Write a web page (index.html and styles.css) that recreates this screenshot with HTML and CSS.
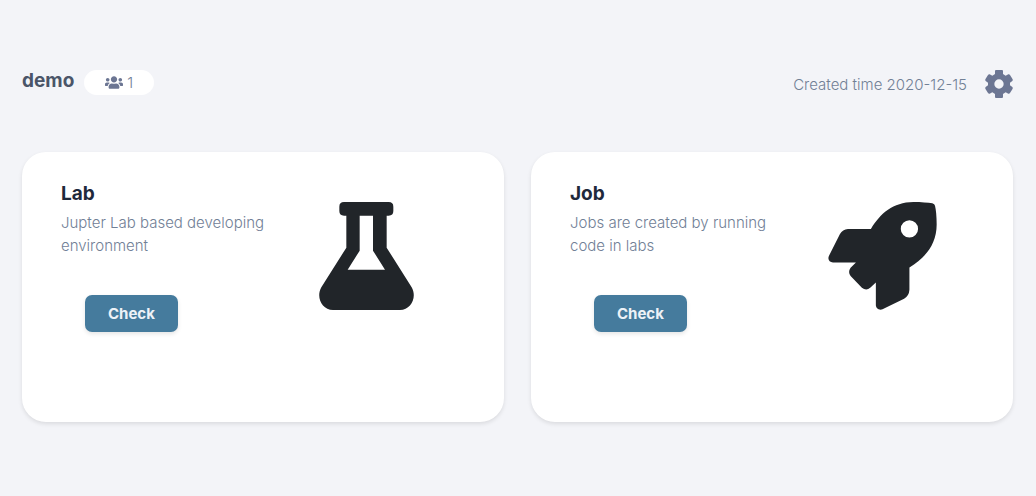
FILE: index.html
```html
<!DOCTYPE html>
<html lang="en">
<head>
<meta charset="utf-8">
<meta name="viewport" content="width=device-width, initial-scale=1">
<title>demo</title>
<link rel="stylesheet" href="styles.css">
</head>
<body>
<main class="page">
  <header class="project">
    <h1 class="project-name">demo</h1>
    <span class="members">
      <svg class="members-icon" viewBox="0 0 640 512" aria-hidden="true"><path d="M96 224c35.300 0 64-28.700 64-64s-28.700-64-64-64-64 28.700-64 64 28.700 64 64 64zm448 0c35.300 0 64-28.700 64-64s-28.700-64-64-64-64 28.700-64 64 28.700 64 64 64zm32 32h-64c-17.600 0-33.500 7.100-45.100 18.600 40.300 22.100 68.900 62 75.100 109.400h66c17.700 0 32-14.300 32-32v-32c0-35.300-28.700-64-64-64zm-256 0c61.900 0 112-50.100 112-112S381.900 32 320 32 208 82.100 208 144s50.100 112 112 112zm76.800 32h-8.300c-20.800 10-43.900 16-68.500 16s-47.600-6-68.500-16h-8.300C179.600 288 128 339.600 128 403.200V432c0 26.500 21.500 48 48 48h288c26.500 0 48-21.500 48-48v-28.800c0-63.600-51.600-115.200-115.200-115.200zm-223.700-13.400C161.500 263.100 145.600 256 128 256H64c-35.300 0-64 28.700-64 64v32c0 17.700 14.300 32 32 32h65.900c6.300-47.400 34.900-87.300 75.200-109.400z"/></svg>
      <span>1</span>
    </span>
    <span class="created">Created time 2020-12-15</span>
    <button class="settings" type="button" aria-label="Settings">
      <svg class="settings-icon" viewBox="0 0 84 84" aria-hidden="true"><path fill-rule="evenodd" d="M33 0h18q3 0 3 3v9l8 5 8-4q3-1 5 2l8 13q1 3-1 5l-7 5v8l7 5q2 2 1 5l-8 13q-2 3-5 2l-8-4-8 5v9q0 3-3 3H33q-3 0-3-3v-9l-8-5-8 4q-3 1-5-2L1 56q-1-3 1-5l7-5v-8l-7-5q-2-2-1-5l8-13q2-3 5-2l8 4 8-5V3q0-3 3-3zm9 28a14 14 0 1 0 0 28a14 14 0 1 0 0-28z"/></svg>
    </button>
  </header>
  <section class="cards">
    <article class="card">
      <div class="card-text">
        <h2 class="card-title">Lab</h2>
        <p class="card-description">Jupter Lab based developing environment</p>
        <button class="check" type="button">Check</button>
      </div>
      <svg class="flask" viewBox="57 37 285 324" aria-hidden="true"><path fill-rule="evenodd" d="M132 37H266Q280 37 280 51V64Q280 78 266 78H260V174L335 293C352 323 333 361 300 361H99C66 361 47 323 64 293L139 174V78H132Q118 78 118 64V51Q118 37 132 37ZM179 78V183L143 240H255L219 183V78Z"/></svg>
    </article>
    <article class="card">
      <div class="card-text">
        <h2 class="card-title">Job</h2>
        <p class="card-description">Jobs are created by running code in labs</p>
        <button class="check" type="button">Check</button>
      </div>
      <svg class="rocket" viewBox="24 37 326 325" aria-hidden="true"><path fill-rule="evenodd" d="M152 118C181 71 218 38 280 37C304 37 324 39 337 41Q344 43 345 48C348 60 350 79 350 105C350 166 315 205 268 234V301Q267 319 252 328L187 360C177 364 167 357 167 347V279L150 295Q138 305 125 295L91 260Q82 248 91 235L107 219H38C27 218 21 209 26 199L59 133Q67 119 83 118ZM268 92A26 26 0 1 0 268 144A26 26 0 1 0 268 92Z"/></svg>
    </article>
  </section>
</main>
</body>
</html>
```
FILE: styles.css
```css
* {
  box-sizing: border-box;
}

body {
  margin: 0;
  background: #f3f4f8;
  color: #718096;
  font: 300 15px/23px Inter, "Open Sans", sans-serif;
}

h1,
h2,
p {
  margin: 0;
}

button {
  border: 0;
  font-family: inherit;
  cursor: pointer;
}

svg {
  display: block;
}

.page {
  padding: 68px 23px 72px 22px;
}

.project {
  display: flex;
  align-items: flex-start;
  margin-bottom: 54px;
}

.project-name {
  color: #4a5568;
  font-size: 19px;
  font-weight: 700;
  line-height: 26px;
}

.members {
  display: flex;
  align-items: center;
  justify-content: center;
  gap: 4px;
  width: 70px;
  height: 25px;
  margin: 2px 0 0 10px;
  border-radius: 13px;
  background: #fff;
}

.members-icon {
  width: 18px;
  height: 15px;
  fill: #6c7693;
}

.created {
  margin: 5px 18px 0 auto;
}

.settings {
  margin-top: 2px;
  padding: 0;
  background: none;
}

.settings-icon {
  width: 28px;
  height: 28px;
  fill: #6c7693;
}

.cards {
  display: grid;
  grid-template-columns: repeat(auto-fit, minmax(420px, 1fr));
  gap: 27px;
}

.card {
  display: grid;
  grid-template-columns: 210px auto;
  justify-content: start;
  align-items: start;
  column-gap: 48px;
  min-height: 270px;
  padding: 30px 39px;
  border-radius: 24px;
  background: #fff;
  box-shadow: 0 2px 4px rgba(0, 0, 0, 0.1);
}

.card-title {
  margin-bottom: 5px;
  color: #1f293b;
  font-size: 19px;
  font-weight: 700;
  line-height: 24px;
}

.check {
  margin: 38px 0 0 24px;
  padding: 7px 23px;
  border-radius: 7px;
  background: #457b9d;
  box-shadow: 0 2px 4px rgba(0, 0, 0, 0.1);
  color: #edf2f7;
  font-size: 15px;
  font-weight: 700;
  line-height: 23px;
}

.flask,
.rocket {
  height: 108px;
  margin-top: 20px;
  fill: #212529;
}

.flask {
  width: 95px;
}

.rocket {
  width: 109px;
}
```
